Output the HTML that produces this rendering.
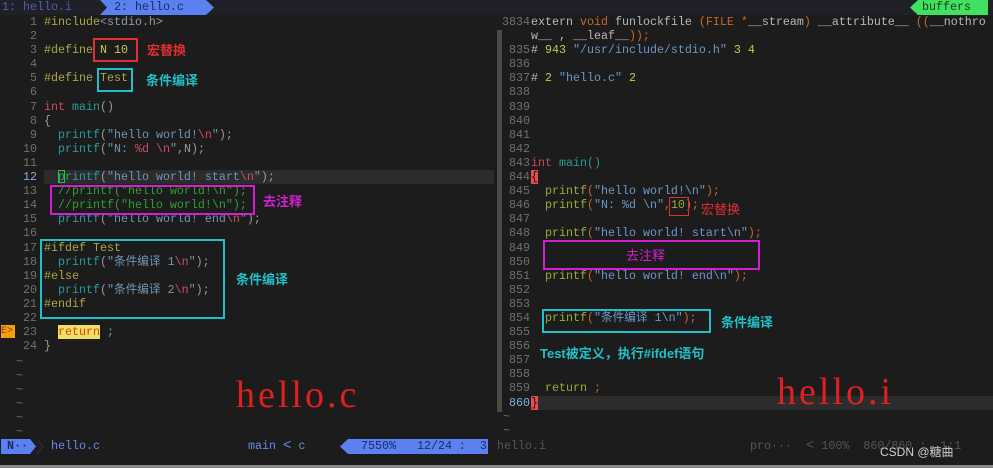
<!DOCTYPE html>
<html><head><meta charset="utf-8"><style>
body{margin:0;width:993px;height:468px;background:#1c1c1c;overflow:hidden;position:relative;font-family:"Liberation Mono","Noto Sans CJK SC",monospace;font-size:11.67px;}
.l{position:absolute;height:14px;line-height:14px;white-space:pre;}
.n{color:#707070;}
.pp{color:#a8a848}.gy{color:#8a9aa8}.kw{color:#c84a5a}.tl{color:#2a9a9a}.st{color:#6f95b5}.es{color:#c85060}.cm{color:#30a030}.pu{color:#9a9a9a}
.yg{color:#9aab3a}.or{color:#c8682a}.wh{color:#b8b8b8}.bl{color:#6a98c8}.yl{color:#c8c850}
.box{position:absolute;border:2px solid;}
.cn{position:absolute;font-family:"Liberation Sans","Noto Sans CJK SC",sans-serif;font-size:13px;font-weight:bold;white-space:nowrap;}
.big{position:absolute;font-family:'Liberation Serif',serif;font-size:38px;color:#e02020;line-height:40px;letter-spacing:3px}
</style></head><body>
<div style="position:absolute;left:0;top:0;width:993px;height:15px;background:#202028"></div>
<div class="l" style="left:2px;top:0;color:#4a60b0">1: hello.i</div>
<svg style="position:absolute;left:100px;top:0" width="115" height="15"><polygon points="0,0 106,0 114,7.5 106,15 0,15 7,7.5" fill="#5b80f0"/></svg>
<div class="l" style="left:114px;top:0;color:#1c2a6a">2: hello.c</div>
<svg style="position:absolute;left:910px;top:0" width="80" height="15"><polygon points="8,0 78,0 78,15 8,15 0,7.5" fill="#40e060"/></svg>
<div class="l" style="left:922px;top:0;color:#1c3a1c">buffers</div>
<div style="position:absolute;left:44px;top:170px;width:450px;height:14px;background:#2c2c2c"></div>
<div class="l n" style="left:9px;top:15px;width:28px;text-align:right;line-height:14.1px;height:auto">1
2
3
4
5
6
7
8
9
10
11
<span style="color:#7fb0e0">12</span>
13
14
15
16
17
18
19
20
21
22
23
24</div>
<div class="l" style="left:44px;top:15px;line-height:14.1px;height:auto"><span class="pp">#include</span><span class="gy">&lt;stdio.h&gt;</span>

<span class="pp">#define</span> <span class="yl">N 10</span>

<span class="pp">#define</span> <span class="pp">Test</span>

<span class="kw">int</span> <span class="tl">main</span><span class="pu">()</span>
<span class="pu">{</span>
  <span class="tl">printf</span><span class="pu">(</span><span class="st">"hello world!</span><span class="es">\n</span><span class="st">"</span><span class="pu">);</span>
  <span class="tl">printf</span><span class="pu">(</span><span class="st">"N: </span><span class="es">%d</span><span class="st"> </span><span class="es">\n</span><span class="st">"</span><span class="pu">,N);</span>

  <span class="tl">printf</span><span class="pu">(</span><span class="st">"hello world! start</span><span class="es">\n</span><span class="st">"</span><span class="pu">);</span>
  <span class="cm">//printf("hello world!\n");</span>
  <span class="cm">//printf("hello world!\n");</span>
  <span class="tl">printf</span><span class="pu">(</span><span class="st">"hello world! end</span><span class="es">\n</span><span class="st">"</span><span class="pu">);</span>

<span class="pp">#ifdef Test</span>
  <span class="tl">printf</span><span class="pu">(</span><span class="st">"条件编译 1</span><span class="es">\n</span><span class="st">"</span><span class="pu">);</span>
<span class="pp">#else</span>
  <span class="tl">printf</span><span class="pu">(</span><span class="st">"条件编译 2</span><span class="es">\n</span><span class="st">"</span><span class="pu">);</span>
<span class="pp">#endif</span>

  <span style="background:#f0e060;color:#e04020">return</span> <span class="pu">;</span>
<span class="pu">}</span></div>
<div style="position:absolute;left:58px;top:170px;width:7px;height:13px;border:1px solid #20d020;box-sizing:border-box"></div>
<div style="position:absolute;left:1px;top:325px;width:14px;height:13px;background:#f0a010;color:#a04000;font-size:10px;line-height:13px">E&gt;</div>
<div class="l n" style="left:16px;top:355px;line-height:14.1px;height:auto">~
~
~
~
~
~</div>
<div class="box" style="left:93px;top:38px;width:41px;height:20px;border-color:#e03030"></div>
<div class="cn" style="left:147px;top:40px;color:#e03030">宏替换</div>
<div class="box" style="left:97px;top:68px;width:32px;height:20px;border-color:#20c0c8"></div>
<div class="cn" style="left:146px;top:70px;color:#20c0c8">条件编译</div>
<div class="box" style="left:50px;top:185px;width:201px;height:26px;border-color:#d020d0"></div>
<div class="cn" style="left:263px;top:191px;color:#d020d0">去注释</div>
<div class="box" style="left:40px;top:239px;width:181px;height:76px;border-color:#20c0c8"></div>
<div class="cn" style="left:236px;top:269px;color:#20c0c8">条件编译</div>
<div class="big" style="left:236px;top:375px">hello.c</div>
<div style="position:absolute;left:497px;top:30px;width:5px;height:382px;background:#4a4a4a"></div>
<div style="position:absolute;left:531px;top:396px;width:462px;height:14px;background:#2c2c2c"></div>
<div class="l n" style="left:495px;top:15px;width:35px;text-align:right;line-height:14.1px;height:auto">3834

835
836
837
838
839
840
841
842
843
844
845
846
847
848
849
850
851
852
853
854
855
856
857
858
859
<span style="color:#7fb0e0">860</span></div>
<div class="l" style="left:531px;top:15px;line-height:14.1px;height:auto"><span class="wh">extern</span> <span class="or">void</span> <span class="wh">funlockfile</span> <span class="or">(FILE *</span><span class="wh">__stream</span><span class="or">)</span> <span class="wh">__attribute__</span> <span class="or">((</span><span class="wh">__nothro</span>
<span class="wh">w__ , __leaf__</span><span class="or">));</span>
<span class="wh">#</span> <span class="yl">943</span> <span class="bl">"/usr/include/stdio.h"</span> <span class="yl">3 4</span>

<span class="wh">#</span> <span class="yl">2</span> <span class="bl">"hello.c"</span> <span class="yl">2</span>





<span class="kw">int</span> <span class="tl">main</span><span class="tl">()</span>
<span style="background:#e05050;color:#300">{</span>
  <span class="yg">printf</span><span class="or">(</span><span class="bl">"hello world!\n"</span><span class="or">);</span>
  <span class="yg">printf</span><span class="or">(</span><span class="bl">"N: %d \n"</span><span class="or">,</span><span class="yg">10</span><span class="or">);</span>

  <span class="yg">printf</span><span class="or">(</span><span class="bl">"hello world! start\n"</span><span class="or">);</span>


  <span class="yg">printf</span><span class="or">(</span><span class="bl">"hello world! end\n"</span><span class="or">);</span>


  <span class="yg">printf</span><span class="or">(</span><span class="bl">"条件编译 1\n"</span><span class="or">);</span>




  <span class="yg">return</span> <span class="or">;</span>
<span style="background:#e05050;color:#300">}</span></div>
<div class="l n" style="left:503px;top:410px;line-height:14.1px;height:auto">~
~</div>
<div class="box" style="left:669px;top:197px;width:18px;height:17px;border-color:#e03030;border-width:1px"></div>
<div class="cn" style="left:701px;top:199px;color:#e03030;font-weight:normal">宏替换</div>
<div class="box" style="left:543px;top:240px;width:213px;height:26px;border-color:#d020d0"></div>
<div class="cn" style="left:626px;top:245px;color:#d020d0;font-weight:normal">去注释</div>
<div class="box" style="left:542px;top:309px;width:165px;height:20px;border-color:#20c0c8"></div>
<div class="cn" style="left:721px;top:312px;color:#20c0c8">条件编译</div>
<div class="cn" style="left:540px;top:343px;color:#20c0c8">Test被定义，执行#ifdef语句</div>
<div class="big" style="left:777px;top:372px">hello.i</div>
<svg style="position:absolute;left:0;top:439px" width="500" height="15">
<polygon points="1,0 30,0 36,7.5 30,15 1,15" fill="#5b80f0"/>
<polygon points="36,0 42,7.5 36,15 38,15 44,7.5 38,0" fill="#2a2a2a"/>
<polygon points="340,7.5 348,0 488,0 488,15 348,15" fill="#5b80f0"/>
</svg>
<div class="l" style="left:7px;top:439px;color:#1c2a6a;font-weight:bold">N··</div>
<div class="l" style="left:51px;top:439px;color:#6a88e8">hello.c</div>
<div class="l" style="left:248px;top:439px;color:#6a88e8">main <span style="font-size:14px">&lt;</span> c</div>
<div class="l" style="left:361px;top:439px;color:#1c2a6a">7550%   12/24 :  3</div>
<div class="l" style="left:497px;top:439px;color:#555">hello.i</div>
<div class="l" style="left:750px;top:439px;color:#555">pro···  <span style="font-size:14px">&lt;</span> 100%  860/860 :  1:1</div>
<div style="position:absolute;left:880px;top:443px;font-family:'Liberation Sans','Noto Sans CJK SC',sans-serif;font-size:12px;color:#d0d0d0">CSDN @糖曲</div>
<div style="position:absolute;left:0;top:465px;width:993px;height:3px;background:#8a8a8a"></div>
</body></html>
